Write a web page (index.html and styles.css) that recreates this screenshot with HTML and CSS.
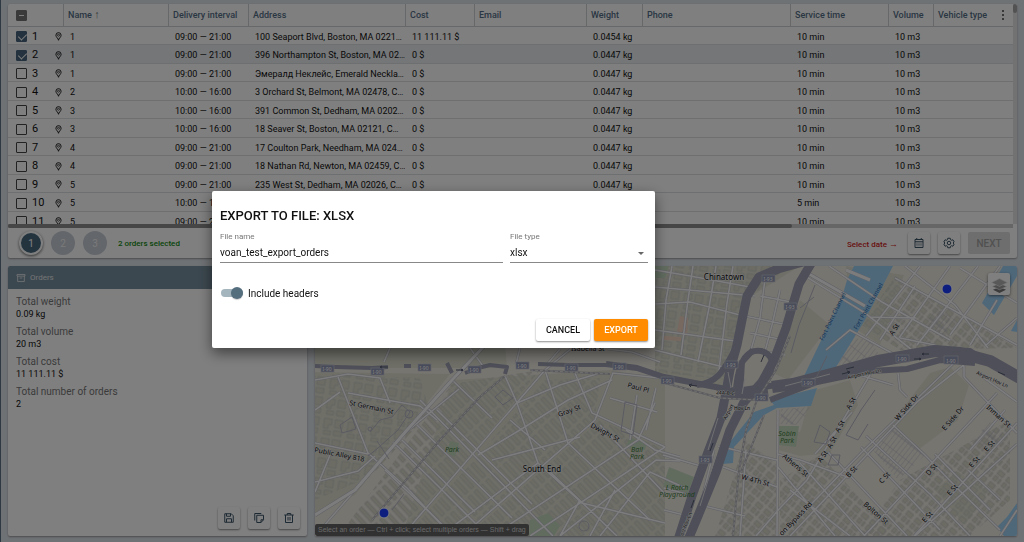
FILE: index.html
```html
<!DOCTYPE html>
<html lang="en">
<head>
<meta charset="utf-8">
<title>Orders</title>
<link rel="stylesheet" href="styles.css">
</head>
<body>
<svg class="sprite" aria-hidden="true">
  <symbol id="pin" viewBox="0 0 14 18"><path d="M7 16.5C7 13 1.8 10.500 1.800 6.500a5.200 5.200 0 0 1 10.400 0C12.200 10.500 7 13 7 16.500Z" fill="none" stroke="currentColor" stroke-width="2"/><circle cx="7" cy="6.500" r="2" fill="none" stroke="currentColor" stroke-width="1.500"/></symbol>
</svg>
<main class="page">
  <section class="card orders">
    <div class="grid">
      <table class="table">
        <colgroup><col class="c-pick"><col class="c-name"><col class="c-time"><col class="c-addr"><col class="c-cost"><col class="c-mail"><col class="c-weight"><col class="c-phone"><col class="c-service"><col class="c-volume"><col></colgroup>
        <thead>
          <tr>
            <th><input class="check partial" type="checkbox" aria-label="Select all"></th>
            <th>Name <span class="sort">↑</span></th><th>Delivery interval</th><th>Address</th><th>Cost</th><th>Email</th><th>Weight</th><th>Phone</th><th>Service time</th><th>Volume</th>
            <th><span class="last-head">Vehicle type <button class="more" aria-label="Columns"><i></i><i></i><i></i></button></span></th>
          </tr>
        </thead>
        <tbody>
          <tr><td><label class="pick"><input class="check" type="checkbox" checked><span>1</span><svg class="pin"><use href="#pin"/></svg></label></td><td>1</td><td>09:00 — 21:00</td><td>100 Seaport Blvd, Boston, MA 0221…</td><td>11 111.11 $</td><td></td><td>0.0454 kg</td><td></td><td>10 min</td><td>10 m3</td><td></td></tr>
          <tr class="active"><td><label class="pick"><input class="check" type="checkbox" checked><span>2</span><svg class="pin"><use href="#pin"/></svg></label></td><td>1</td><td>09:00 — 21:00</td><td>396 Northampton St, Boston, MA 02…</td><td>0 $</td><td></td><td>0.0447 kg</td><td></td><td>10 min</td><td>10 m3</td><td></td></tr>
          <tr><td><label class="pick"><input class="check" type="checkbox"><span>3</span><svg class="pin"><use href="#pin"/></svg></label></td><td>1</td><td>09:00 — 21:00</td><td>Эмералд Неклейс, Emerald Neckla…</td><td>0 $</td><td></td><td>0.0447 kg</td><td></td><td>10 min</td><td>10 m3</td><td></td></tr>
          <tr><td><label class="pick"><input class="check" type="checkbox"><span>4</span><svg class="pin"><use href="#pin"/></svg></label></td><td>2</td><td>10:00 — 16:00</td><td>3 Orchard St, Belmont, MA 02478, C…</td><td>0 $</td><td></td><td>0.0447 kg</td><td></td><td>10 min</td><td>10 m3</td><td></td></tr>
          <tr><td><label class="pick"><input class="check" type="checkbox"><span>5</span><svg class="pin"><use href="#pin"/></svg></label></td><td>3</td><td>10:00 — 16:00</td><td>391 Common St, Dedham, MA 0202…</td><td>0 $</td><td></td><td>0.0447 kg</td><td></td><td>10 min</td><td>10 m3</td><td></td></tr>
          <tr><td><label class="pick"><input class="check" type="checkbox"><span>6</span><svg class="pin"><use href="#pin"/></svg></label></td><td>3</td><td>10:00 — 16:00</td><td>18 Seaver St, Boston, MA 02121, C…</td><td>0 $</td><td></td><td>0.0447 kg</td><td></td><td>10 min</td><td>10 m3</td><td></td></tr>
          <tr><td><label class="pick"><input class="check" type="checkbox"><span>7</span><svg class="pin"><use href="#pin"/></svg></label></td><td>4</td><td>09:00 — 21:00</td><td>17 Coulton Park, Needham, MA 024…</td><td>0 $</td><td></td><td>0.0447 kg</td><td></td><td>10 min</td><td>10 m3</td><td></td></tr>
          <tr><td><label class="pick"><input class="check" type="checkbox"><span>8</span><svg class="pin"><use href="#pin"/></svg></label></td><td>4</td><td>09:00 — 21:00</td><td>18 Nathan Rd, Newton, MA 02459, C…</td><td>0 $</td><td></td><td>0.0447 kg</td><td></td><td>10 min</td><td>10 m3</td><td></td></tr>
          <tr><td><label class="pick"><input class="check" type="checkbox"><span>9</span><svg class="pin"><use href="#pin"/></svg></label></td><td>5</td><td>09:00 — 21:00</td><td>235 West St, Dedham, MA 02026, C…</td><td>0 $</td><td></td><td>0.0447 kg</td><td></td><td>10 min</td><td>10 m3</td><td></td></tr>
          <tr><td><label class="pick"><input class="check" type="checkbox"><span>10</span><svg class="pin"><use href="#pin"/></svg></label></td><td>5</td><td>10:00 — 13:00</td><td></td><td></td><td></td><td></td><td></td><td>5 min</td><td>10 m3</td><td></td></tr>
          <tr><td><label class="pick"><input class="check" type="checkbox"><span>11</span><svg class="pin"><use href="#pin"/></svg></label></td><td>5</td><td>09:00 — 21:00</td><td></td><td></td><td></td><td></td><td></td><td>10 min</td><td>10 m3</td><td></td></tr>
        </tbody>
      </table>
      <div class="vbar"><div class="vthumb"></div></div>
      <div class="hbar"><div class="hthumb"></div></div>
    </div>
    <div class="toolbar">
      <button class="step current">1</button>
      <button class="step">2</button>
      <button class="step">3</button>
      <span class="selected">2 orders selected</span>
      <span class="hint">Select date <span class="arrow">→</span></span>
      <button class="tool" aria-label="Calendar"><svg viewBox="0 0 24 24"><path d="M4 5h16v16H4zM4 9.500h16M7.500 2v3M16.500 2v3" /><path d="M7 12.500h2m2 0h2m2 0h2M7 15h2m2 0h2m2 0h2M7 17.500h2m2 0h2m2 0h2" stroke-width="1.500"/></svg></button>
      <button class="tool" aria-label="Settings"><svg viewBox="0 0 24 24"><path d="M9.500 2.500h5l.7 3 1.700 1 3-.9 2.400 4.200-2.200 2.200 2.200 2.200-2.400 4.200-3-.9-1.700 1-.7 3h-5l-.7-3-1.700-1-3 .9-2.400-4.200L3.900 12 1.700 9.800l2.400-4.200 3 .9 1.700-1z"/><circle cx="12" cy="12" r="3.500"/></svg></button>
      <button class="next" disabled>NEXT</button>
    </div>
  </section>

  <section class="card summary">
    <h2 class="bar"><svg viewBox="0 0 24 24"><path d="M2.500 3.500h19v4h-19zM4 7.500v13h16v-13M9 12h6"/></svg>Orders</h2>
    <dl class="totals">
      <div><dt>Total weight</dt><dd>0.09 kg</dd></div>
      <div><dt>Total volume</dt><dd>20 m3</dd></div>
      <div><dt>Total cost</dt><dd>11 111.11 $</dd></div>
      <div><dt>Total number of orders</dt><dd>2</dd></div>
    </dl>
    <div class="actions">
      <button class="tool" aria-label="Save"><svg viewBox="0 0 24 24"><path d="M3.500 3.500h13l4 4v13h-17zM7 3.500v5h8v-5M7 20.500v-7h10v7"/></svg></button>
      <button class="tool" aria-label="Copy"><svg viewBox="0 0 24 24"><path d="M3.500 17V3h13M7.500 6.500H21v9l-5 5.500H7.500zM21 15.500h-5V21"/></svg></button>
      <button class="tool" aria-label="Delete"><svg viewBox="0 0 24 24"><path d="M2.500 6h19M8.500 6V3h7v3M5 6v15h14V6M10 10v7M14 10v7"/></svg></button>
    </div>
  </section>

  <section class="card map">
    <svg class="tiles" viewBox="315 266 702 270" preserveAspectRatio="xMidYMid slice" role="img" aria-label="Map of Boston">
      <defs>
        <pattern id="rows" width="22" height="8" patternUnits="userSpaceOnUse" patternTransform="rotate(47)"><rect x="1" y="1" width="18" height="4" class="house"/></pattern>
        <pattern id="blocks" width="15" height="11" patternUnits="userSpaceOnUse" patternTransform="rotate(-50)"><path class="house" d="M1 1h5v4H1zM8 1h5v7H8zM1 7h5v2H1z"/></pattern>
        <pattern id="town" width="24" height="20" patternUnits="userSpaceOnUse" patternTransform="rotate(9)"><path class="house" d="M2 2h8v6H7v4H2zM13 2h8v8h-8zM3 14h7v4H3zM13 13h8v5h-8z"/></pattern>
        <pattern id="lots" width="4" height="28" patternUnits="userSpaceOnUse" patternTransform="rotate(38)"><path class="lot" d="M0 0v28M0 14h4M0 0h4"/></pattern>
        <g id="streets">
          <path d="M315 345L340 338M390 348L384 362M470 348L483 366M520 348L516 364M560 349L548 363M608 349L632 352L660 362M315 380L348 374L380 378L390 403M338 377L368 453M348 393L420 406L437 420M315 443L368 454M315 410L340 392M330 455L315 492M368 453L407 488L452 536M393 442L430 478L488 536M375 456L358 471L315 482"/>
          <path d="M452 380L492 418M437 410L532 504M420 400L512 494L553 536M417 425L512 518M402 440L475 512M385 470L447 529M505 376L517 403L538 463L582 503L665 523M545 370L568 443M575 373L592 413L665 447M478 455L520 430L568 400L612 380M517 403L560 385L600 373M492 460L580 437M510 420L545 450"/>
          <path d="M315 536L405 433L459 389M402 536L545 370L572 348M462 536L595 420L613 373L660 378M492 536L638 440L655 403M530 536L665 447M440 536L538 463M560 536L656 460L680 461M600 536L650 472L685 488M548 470L617 536M568 443L650 520M600 425L665 494M626 430L655 450L680 457M637 395L630 440M656 388L646 430M610 398L657 412M580 500L560 536M615 490L590 536"/>
          <path d="M655 304L690 302L740 315L783 324M655 350L695 360L728 368M655 270L690 276L750 287M672 266L666 300L662 350M693 266L688 300L681 355M716 266L709 308L698 362M733 266L727 303L719 370M765 279L760 318L751 350M780 290L772 325L764 355M655 330L735 341M750 333L784 340M752 350L785 355M760 296L791 302M655 287L755 296"/>
          <path d="M805 276L865 313L912 350M829 266L882 302L950 340M895 278L1017 345M920 266L866 336M950 266L899 338M978 266L917 345M1000 266L950 335M915 286L880 340M905 266L955 305L988 348M960 268L1017 303M997 300L970 345M1017 318L985 346M900 338L935 345M870 317L916 318M826 350L850 330L899 357"/>
          <path d="M879 360L807 480L780 508L756 536M954 363L862 452L780 536M965 364L918 401L862 460L790 536M997 393L864 536M1017 423L914 536M964 366L964 377L1017 433M915 536L1017 444M1000 536L1017 510M859 375L893 385M898 373L900 390L907 397M777 454L800 460L850 478M777 466L835 536M800 463L865 536M828 452L907 536M861 447L940 530M866 436L930 494L970 536M893 425L925 455L960 491L1000 530M935 454L990 510M790 490L850 536M852 412L840 426L815 454M968 470L1000 500M1005 410L970 450M980 375L1017 402M778 410L777 536M718 446L777 460M718 465L777 487M746 450L740 536M663 455L704 467M664 488L690 495M664 510L684 515M700 505L745 516M714 450L693 536"/>
        </g>
        <g id="freeways">
          <path class="fw4" d="M315 366L336 367L372 368L388 367M404 366L411 366M447 363L452 373M465 373L478 368L490 365L507 367L505 374M538 364L568 365L610 365"/>
          <path class="fw6" d="M606 364L637 368L664 377L700 384L736 391L770 386L788 383"/>
          <path class="fw8" d="M812 262L799 284L793 304L786 328L774 360L762 382L744 402L730 430L716 472L698 516L688 540"/>
          <path class="fw8" d="M803 262L778 269L759 277L747 296L742 320L737 345L730 370L726 392L721 418L708 452L692 496L678 540"/>
          <path class="fw6" d="M736 388C739 359 748 349 761 351C779 355 773 376 758 392M738 345C725 365 722 382 697 385M740 394L742 362L753 350"/>
          <path class="fw12" d="M772 387L793 384L835 373L878 361L935 351L960 353L990 361L1025 381"/>
          <path class="fw6" d="M770 400L817 382L870 371L907 369L940 360L975 363"/>
          <path class="fw4" d="M915 351L946 349L970 350L986 360"/>
          <path class="fw8" d="M724 394L745 395L768 392"/>
        </g>
      </defs>
      <rect class="land" x="0" y="0" width="1400" height="800"/>
      <path class="zone" d="M655 266H800L745 300L728 390L655 372ZM315 372L450 374L355 495L315 513ZM315 342H505L507 368H315ZM452 380L612 370L665 380L665 536H402ZM800 300L830 325L788 380L775 374ZM812 391L850 380L858 405L830 453L800 456L778 450V430L800 432ZM930 373L950 367L969 385L958 420L918 450L890 425ZM935 490L957 471L988 491L965 525ZM846 266L904 275L880 345L850 325Z"/>
      <path d="M655 266H790L745 300L728 380L655 372Z" fill="url(#town)"/>
      <path d="M315 374L420 378L430 412L370 477L315 500Z" fill="url(#town)"/>
      <path d="M452 384L540 370L405 534H340Z" fill="url(#rows)"/>
      <path d="M545 380L600 378L595 418L462 534H408Z" fill="url(#rows)"/>
      <path d="M600 420L665 450V536H467Z" fill="url(#rows)"/>
      <path d="M895 276L1017 348L900 350L862 325Z" fill="url(#blocks)"/>
      <path d="M780 480L820 455L895 536H780Z" fill="url(#blocks)"/>
      <path d="M900 480L1010 420V500L970 536H860Z" fill="url(#blocks)"/>
      <path d="M745 440L777 465V536H715Z" fill="url(#blocks)"/>
      <path d="M893 425L925 455L898 480L870 446ZM845 337L870 340L880 356L838 368ZM935 307L955 320L943 339L925 327ZM781 409L810 407L800 425L780 424ZM990 422L1006 435L990 452L972 440Z" fill="url(#lots)"/>
      <path class="pink" d="M680 316l8 2-1 18-10-5zM664 336l17 1v4l-17-1z"/>
      <path class="park" d="M655 266h14l-4 12h-10zM777 426h22l-3 21-18-2zM669 467l25 10-7 19-24-9zM629 438l18 4-2 8-19-2zM530 520l18-7 12 13-6 10h-25zM450 441l9 2-4 14-8-4z"/>
      <path class="water" d="M854 266H893L865 320L833 372L803 378L842 297L847 280ZM817 388L811 406L777 408L764 415L734 447L733 463L723 464L726 447L754 412L774 405L770 400ZM1003 266H1017V276L994 315L982 303ZM1017 320V332L1011 331ZM1017 503L1007 517L997 527L1004 536H1017Z"/>
      <use href="#streets" class="casing"/>
      <use href="#streets" class="street"/>
      <path class="casing wide" d="M315 515L355 490L407 430L452 380L488 342"/><path class="street wide" d="M315 515L355 490L407 430L452 380L488 342"/>
      <path class="casing wide" d="M802 270L865 306M870 280L846 270"/><path class="street wide" d="M802 270L865 306M870 280L846 270"/>
      <use href="#freeways" class="freeway"/>
      <path class="ramps" d="M728 372L731 388M745 378L742 394M785 386L830 374M716 455L700 506M718 418L708 450"/>
      <path class="rail-base" d="M372 520L440 440L480 397L505 376M530 370L610 374M665 383L720 398L757 400L776 370L790 336M757 400L746 430L739 470L733 536M764 415L750 450L741 472"/>
      <path class="rail" d="M372 520L440 440L480 397L505 376M530 370L610 374M665 383L720 398L757 400L776 370L790 336M757 400L746 430L739 470L733 536M764 415L750 450L741 472"/>
      <g class="outline"><path d="M370 432l10-12 12-3 10-12 8 7-12 18-20 18-10 8M389 459l-12-18M404 494l-12 16M340 425l12-8 4 12-14 4zM503 390l10 8-10 7-8-8zM827 356l-13 26M868 424l-10 16-12-5 15-25 14-20M820 425l10 7-4 12-12-2zM832 455h8l-2 10h-10zM625 402l12 3-4 30-12-4zM800 308l14-11M815 285l-16 40-8 28"/><circle cx="409" cy="414" r="4"/><circle cx="370" cy="429" r="2"/><circle cx="584" cy="526" r="5"/></g>
      <g class="shields"><rect x="321" y="365" width="13" height="7"/><rect x="371" y="368" width="13" height="7"/><rect x="418" y="364" width="13" height="7"/><rect x="468" y="366" width="13" height="7"/><rect x="516" y="362" width="13" height="7"/><rect x="565" y="364" width="13" height="7"/><rect x="613" y="363" width="13" height="7"/><rect x="661" y="377" width="13" height="7"/><rect x="762" y="275" width="13" height="7"/><rect x="784" y="303" width="13" height="7"/><rect x="725" y="361" width="13" height="7"/><rect x="699" y="456" width="13" height="7"/><rect x="755" y="394" width="13" height="7"/><rect x="802" y="379" width="13" height="7"/><rect x="896" y="355" width="13" height="7"/><rect x="944" y="356" width="14" height="8"/></g>
      <g class="shield-text"><text x="327" y="371">I-90</text><text x="377" y="374">I-90</text><text x="424" y="370">I-90</text><text x="474" y="372">I-90</text><text x="522" y="368">I-90</text><text x="571" y="370">I-90</text><text x="619" y="369">I-90</text><text x="667" y="383">I-90</text><text x="768" y="281">I-93</text><text x="790" y="309">I-93</text><text x="731" y="367">I-93</text><text x="705" y="462">I-93</text><text x="761" y="400">I-90</text><text x="808" y="385">I-90</text><text x="902" y="361">I-90</text><text x="951" y="363">I-90</text></g>
      <path class="arrows" d="M388 367h-8m2-1l-2 1 2 1M456 370h7m-2-1l2 1-2 1M697 386l-8-1m3-1l-3 1 2 2M842 374l8-2m-3-1l3 1-2 2M846 369l8-2M929 354h-7m2-1l-2 1 2 1M914 359h7m-2-1l2 1-2 1M1005 375l-7-3M713 443l-3 8M694 500l-3 8M764 355l-3 7"/>
      <g class="road-name">
        <text transform="translate(349 405) rotate(12)">St Germain St</text>
        <text transform="translate(314 452) rotate(11)">Public Alley 818</text>
        <text x="571" y="351">Isabella St</text>
        <text transform="translate(627 387) rotate(16)">Paul Pl</text>
        <text transform="translate(559 417) rotate(-20)">Gray St</text>
        <text transform="translate(590 427) rotate(28)">Dwight St</text>
        <text transform="translate(893 336) rotate(-58)">A St</text>
        <text transform="translate(850 410) rotate(-62)">A St</text><text transform="translate(839 433) rotate(-62)">A St</text><text transform="translate(831 449) rotate(-62)">A St</text><text transform="translate(821 463) rotate(-55)">A St</text>
        <text transform="translate(849 478) rotate(-48)">B St</text><text transform="translate(882 484) rotate(-48)">C St</text><text transform="translate(929 476) rotate(-50)">D St</text>
        <text transform="translate(898 421) rotate(-49)">W Side Dr</text><text transform="translate(945 431) rotate(-49)">E Side Dr</text>
        <text transform="translate(986 408) rotate(42)">Inman St</text>
        <text transform="translate(987 452) rotate(-48)">E St</text><text transform="translate(972 468) rotate(-48)">E St</text><text transform="translate(950 496) rotate(-48)">E St</text><text transform="translate(925 523) rotate(-48)">E St</text>
        <text transform="translate(782 457) rotate(40)">Athens St</text>
        <text transform="translate(741 479) rotate(15)">W 4Th St</text>
        <text transform="translate(863 505) rotate(41)">Bolton St</text>
        <text transform="translate(782 536) rotate(-46)">on Bypass Rd</text>
      </g>
      <g class="road-name minor">
        <text transform="translate(716 394) rotate(4)">24A-B-C</text>
        <text transform="translate(726 420) rotate(-62)">Airport</text>
        <text x="734" y="410">Hov Ln</text>
        <text transform="translate(683 536) rotate(-68)">ort Hov Ln</text>
        <text transform="translate(848 379) rotate(-12)">Airport Hov Ln</text>
        <text transform="translate(976 374) rotate(24)">Airport Hov Ln</text>
      </g>
      <g class="water-name"><text transform="translate(823 341) rotate(-64)">Fort Point Channel</text><text transform="translate(857 330) rotate(-60)">Fort Point Channel</text></g>
      <g class="park-name"><text x="452" y="452">Park</text><text x="637" y="452">Ball</text><text x="637" y="459">Park</text><text x="787" y="436">Sobin</text><text x="787" y="443">Park</text><text x="677" y="490">L Rotch</text><text x="677" y="497">Playground</text></g>
      <g class="place"><text x="724" y="280">Chinatown</text><text x="542" y="472">South End</text></g>
      <circle class="marker" cx="947" cy="289" r="5"/><circle class="marker" cx="384" cy="513" r="5"/>
    </svg>
    <button class="layers" aria-label="Layers"><svg viewBox="0 0 26 26"><path d="M13 17l10 4-10 5-10-5z" fill="#777"/><path d="M13 11l11 5-11 5-11-5z" fill="#999" stroke="#eee"/><path d="M13 4l12 6-12 6-12-6z" fill="#b0b0b0" stroke="#eee"/></svg></button>
    <p class="tip">Select an order — Ctrl + click; select multiple orders — Shift + drag</p>
  </section>
</main>

<div class="backdrop">
  <form class="dialog" role="dialog" aria-labelledby="dialog-title">
    <h1 id="dialog-title">EXPORT TO FILE: XLSX</h1>
    <div class="fields">
      <div class="field"><label for="file-name">File name</label><input id="file-name" type="text" value="voan_test_export_orders"></div>
      <div class="field type"><label for="file-type">File type</label><select id="file-type"><option>xlsx</option></select></div>
    </div>
    <label class="toggle"><input type="checkbox" role="switch" checked>Include headers</label>
    <div class="buttons"><button type="button" class="btn">CANCEL</button><button type="button" class="btn primary">EXPORT</button></div>
  </form>
</div>
</body>
</html>
```
FILE: styles.css
```css
* { box-sizing: border-box; }
body { margin: 0; font-family: Roboto, "Liberation Sans", sans-serif; font-size: 10px; color: #111; background: #dfe4e9; }
button, input, select { font: inherit; color: inherit; margin: 0; }
button { border: 0; padding: 0; }
.sprite { position: absolute; width: 0; height: 0; }

.page { height: 100vh; min-height: 500px; display: grid; grid-template-columns: 299fr 702fr; grid-template-rows: 254fr 270fr; gap: 8px; padding: 4px 7px 6px 7px; border-left: 1px solid #5f7386; }
.card { background: #fff; border-radius: 2px; box-shadow: 0 1px 2px rgba(0, 0, 0, .35); overflow: hidden; min-width: 0; min-height: 0; }

.orders { grid-column: 1 / -1; display: flex; flex-direction: column; }
.grid { flex: 1; min-height: 0; display: grid; grid-template-columns: 1fr 4px; grid-template-rows: minmax(0, 1fr) 4px; overflow: hidden; }
.vbar { background: #e4e4e4; }
.vthumb { height: 9px; border-radius: 2px; background: #a4a4a4; }
.hbar { grid-column: 1; background: #ccc; z-index: 1; }
.hthumb { width: 78%; height: 4px; border-radius: 2px; background: #8c8c8c; }
.table { width: 100%; table-layout: fixed; border-collapse: separate; border-spacing: 0; align-self: start; font-size: 9px; }
.c-pick { width: 55px; } .c-name { width: 105px; } .c-time { width: 80px; } .c-addr { width: 157px; } .c-cost { width: 69px; } .c-mail { width: 112px; } .c-weight { width: 56px; } .c-phone { width: 148px; } .c-service { width: 98px; } .c-volume { width: 45px; }
th { height: 23px; padding: 0 4px; text-align: left; font-weight: 500; color: #546e86; border-bottom: 1px solid #cdd1d5; border-left: 1px solid #cdd1d5; white-space: nowrap; }
th:first-child { padding-left: 8px; border-left: 0; }
.sort { font-size: 11px; line-height: 10px; color: #777; }
.last-head { display: flex; align-items: center; justify-content: space-between; }
.more { width: 12px; display: flex; flex-direction: column; align-items: center; gap: 2px; background: none; }
.more i { width: 2px; height: 2px; border-radius: 50%; background: #444; }
td { height: 18px; padding: 2px 0 0 7px; line-height: 12px; border-bottom: 1px solid #dcdfe2; white-space: nowrap; overflow: hidden; }
tbody tr:nth-child(even) td { height: 19px; }
td:first-child { padding-left: 8px; }
.active td { background: #e8ecf0; }
.pick { display: flex; align-items: center; font-size: 11px; }
.pick span { width: 28px; padding-left: 5px; }
.pin { width: 7px; height: 9px; color: #222; }
.check { appearance: none; display: block; width: 11px; height: 11px; border: 1px solid #444; border-radius: 1px; position: relative; flex: none; }
.check:checked { background: #46647c; border-color: #46647c; }
.check:checked::after { content: ""; position: absolute; left: 3px; top: 0; width: 4px; height: 7px; border: solid #fff; border-width: 0 1px 1px 0; transform: rotate(45deg); }
.partial { background: #757575; border-color: #757575; }
.partial::after { content: ""; position: absolute; left: 2px; right: 2px; top: 4px; height: 1px; background: #fff; }

.toolbar { flex: none; height: 30px; display: flex; align-items: center; gap: 8px; padding: 0 7px 0 11px; }
.step { width: 24px; height: 24px; border-radius: 50%; background: #c6ccd4; color: #f4f4f4; }
.step.current { background: #47687e; color: #fff; border: 2px solid #fff; box-shadow: 0 1px 3px rgba(0, 0, 0, .6); }
.selected { margin-left: 3px; color: #128a12; font-size: 8px; font-weight: 500; }
.hint { margin-left: auto; color: #d01c1c; font-size: 8px; font-weight: 500; padding-top: 2px; margin-right: 2px; }
.arrow { font-size: 9px; }
.tool { width: 22px; height: 22px; display: grid; place-items: center; border-radius: 2px; background: #fff; box-shadow: 0 1px 2px rgba(0, 0, 0, .45); }
.tool svg { width: 12px; height: 12px; fill: none; stroke: #3d5566; stroke-width: 2; }
.next { width: 42px; height: 22px; border-radius: 2px; background: #dcdcdc; color: #a3a3a3; font-weight: 500; }

.summary { display: flex; flex-direction: column; }
.bar { margin: 0; height: 23px; flex: none; display: flex; align-items: center; gap: 4px; padding-left: 8px; background: #78909f; color: #e4e8ea; font-size: 8px; font-weight: 400; }
.bar svg { width: 10px; height: 10px; fill: none; stroke: currentColor; stroke-width: 2; }
.totals { flex: 1; margin: 0; padding: 7px 8px; display: flex; flex-direction: column; gap: 5px; line-height: 12px; }
.totals dt { color: #777; }
.totals dd { margin: 0; font-size: 9px; }
.totals div { height: 25px; }
.actions { display: flex; justify-content: flex-end; gap: 8px; padding: 0 7px 7px 0; }

.map { position: relative; }
.tiles { display: block; width: 100%; height: 100%; font-family: "Noto Sans", "DejaVu Sans", sans-serif; font-size: 7px; }
.land { fill: #eeeae1; } .zone { fill: #dfdfd1; }
.house { fill: #d8d8c9; stroke: #bebec0; stroke-width: .6; }
.lot { fill: none; stroke: #b9b9c7; stroke-width: .8; }
.park { fill: #c3d8be; } .pink { fill: #f0d2c0; } .water { fill: #9dd0f5; }
.casing { fill: none; stroke: #c0c0ca; stroke-width: 2.600; }
.street { fill: none; stroke: #f8f8fb; stroke-width: 1.600; }
.casing.wide { stroke-width: 4; } .street.wide { stroke-width: 3; }
.freeway { fill: none; stroke: #9c9fb0; stroke-linejoin: round; }
.fw4 { stroke-width: 4; } .fw6 { stroke-width: 6; } .fw8 { stroke-width: 9; } .fw12 { stroke-width: 12; }
.ramps { fill: none; stroke: #e0e0e4; stroke-width: 1; }
.rail-base { fill: none; stroke: #b5b5bc; stroke-width: 2; } .rail { fill: none; stroke: #e0e0e0; stroke-width: 1; stroke-dasharray: 3 2; }
.outline { fill: none; stroke: #b5b6c4; stroke-width: 1; }
.arrows { fill: none; stroke: #555b70; stroke-width: 1; }
.shields { fill: #9298b4; stroke: #c6c8d6; stroke-width: .7; }
.shield-text { font-size: 5px; fill: #fff; text-anchor: middle; }
.road-name { fill: #111; stroke: #eee; stroke-width: 1; paint-order: stroke; }
.minor { font-size: 5px; }
.water-name { fill: #2563a5; font-size: 6px; }
.park-name { fill: #3f7d3c; font-style: italic; text-anchor: middle; }
.place { fill: #111; font-size: 8px; text-anchor: middle; stroke: #eee; stroke-width: 1; paint-order: stroke; }
.marker { fill: #1b3cff; stroke: #fff; stroke-width: 1; }
.layers { position: absolute; top: 7px; right: 7px; width: 22px; height: 22px; background: #fff; border-radius: 2px; box-shadow: 0 1px 3px rgba(0, 0, 0, .5); display: grid; place-items: center; }
.layers svg { width: 17px; height: 17px; }
.tip { position: absolute; left: 0; bottom: 0; margin: 0; padding: 0 3px; line-height: 12px; border-radius: 2px; background: #626262; color: #d2d2d2; font-family: "Liberation Sans", sans-serif; font-size: 7px; }

.backdrop { position: fixed; inset: 0; z-index: 5; display: flex; align-items: center; justify-content: center; padding: 0 157px 3px 0; background: rgba(0, 0, 0, .5); }
.dialog { width: 443px; max-width: 100%; padding: 17px 7px 7px 8px; border-radius: 2px; background: #fff; box-shadow: 0 5px 14px rgba(0, 0, 0, .5); }
.dialog h1 { margin: 0; font-size: 13px; line-height: 16px; font-weight: 500; }
.fields { display: grid; grid-template-columns: 283fr 138fr; gap: 7px; margin-top: 8px; }
.field { display: flex; flex-direction: column; min-width: 0; }
.field label { font-size: 8px; line-height: 10px; color: #777; }
.field input, .field select { width: 100%; height: 21px; padding: 0; border: 0; border-bottom: 1px solid #888; border-radius: 0; background: none; font-size: 10px; appearance: none; outline: 0; }
.type { position: relative; }
.type::after { content: ""; position: absolute; right: 4px; bottom: 8px; border: 3px solid transparent; border-top-color: #666; border-bottom: 0; }
.toggle { display: flex; align-items: center; gap: 5px; width: max-content; margin-top: 22px; height: 16px; font-size: 10px; }
.toggle input { appearance: none; position: relative; width: 22px; height: 8px; margin-left: 1px; border-radius: 4px; background: #a5b5be; }
.toggle input::after { content: ""; position: absolute; right: 0; top: -2px; width: 12px; height: 12px; border-radius: 50%; background: #546e7e; box-shadow: 0 1px 1px rgba(0, 0, 0, .2); }
.buttons { display: flex; justify-content: flex-end; gap: 4px; margin-top: 18px; }
.btn { width: 54px; height: 22px; border-radius: 2px; background: #fff; font-size: 9px; font-weight: 500; box-shadow: 0 1px 2px rgba(0, 0, 0, .45); }
.btn.primary { background: #ff8c00; color: #fff; }
```
